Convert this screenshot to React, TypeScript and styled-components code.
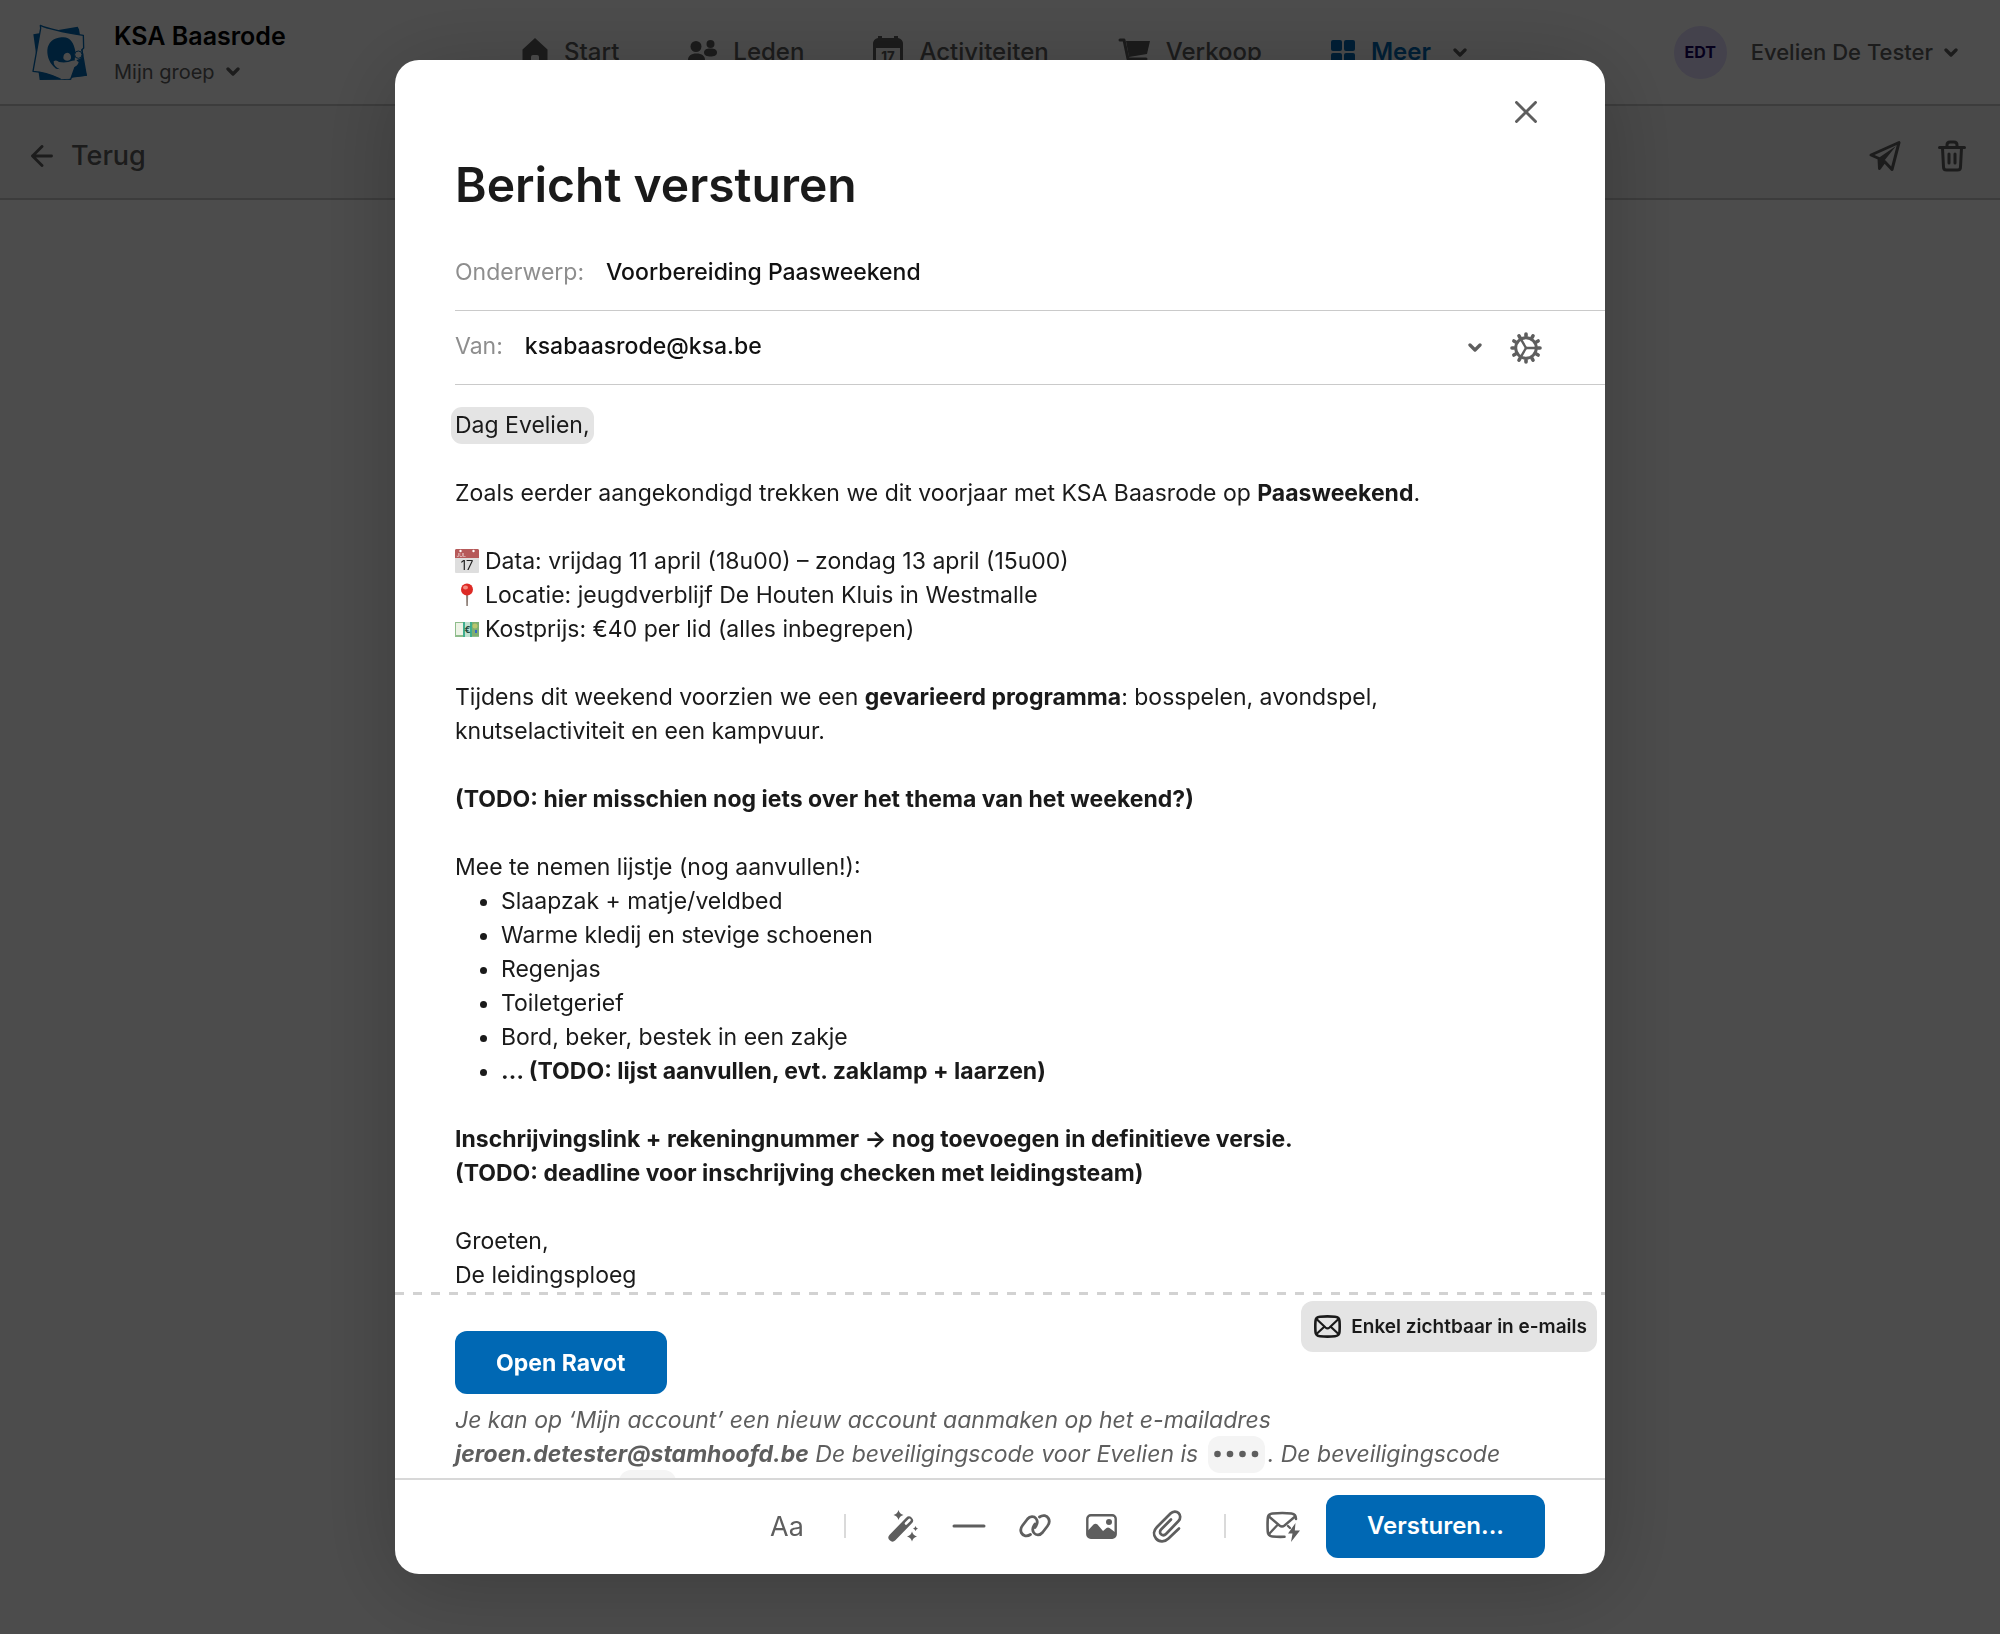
import React from "react";
import styled, { createGlobalStyle, css } from "styled-components";

const blue = "#0068b4";
const ink = "#1a1a1a";
const gray = "#5e5e5e";
const line = "#cacaca";
const sans = `Inter, "Liberation Sans", Arial, sans-serif`;

const GlobalStyle = createGlobalStyle`
  *, *::before, *::after { box-sizing: border-box; }
  body {
    margin: 0;
    background: #fff;
    color: ${ink};
    font-family: ${sans};
  }
  button, input, select { font-family: inherit; }
  svg { display: block; flex: none; }
`;

/* ---------- page behind the dialog ---------- */

const Page = styled.div`
  min-height: 100vh;
  background: #fff;
`;

const Header = styled.header`
  display: grid;
  grid-template-columns: 1fr auto 1fr;
  align-items: center;
  height: 106px;
  padding: 0 42px 0 31px;
  border-bottom: 2px solid ${line};
`;

const Brand = styled.div`
  display: flex;
  align-items: center;
  gap: 25px;
`;

const BrandText = styled.div`
  display: flex;
  flex-direction: column;
  align-items: flex-start;
  gap: 6px;
  padding-top: 3px;
`;

const BrandName = styled.strong`
  font-size: 25px;
  line-height: 30px;
  font-weight: 600;
  color: #000;
`;

const PlainButton = styled.button<{ $size?: number; $gap?: number; $medium?: boolean }>`
  display: flex;
  align-items: center;
  gap: ${(p) => p.$gap ?? 11}px;
  padding: 0;
  border: 0;
  background: none;
  color: ${gray};
  font-size: ${(p) => p.$size ?? 20}px;
  line-height: 30px;
  font-weight: ${(p) => (p.$medium ? 500 : 400)};
`;

const Nav = styled.nav`
  display: flex;
  align-items: center;
  gap: 69px;
`;

const NavLink = styled.a<{ $active?: boolean }>`
  display: flex;
  align-items: center;
  gap: 16px;
  color: ${(p) => (p.$active ? blue : gray)};
  font-size: 24px;
  line-height: 30px;
  font-weight: ${(p) => (p.$active ? 600 : 500)};
  text-decoration: none;
`;

const NavCaret = styled.span`
  margin-left: 6px;
  color: ${gray};
`;

const Account = styled.div`
  display: flex;
  align-items: center;
  justify-content: flex-end;
  gap: 24px;
`;

const Avatar = styled.span`
  display: grid;
  place-items: center;
  width: 53px;
  height: 53px;
  border-radius: 50%;
  background: #e3dcff;
  color: #14005e;
  font-size: 16px;
  font-weight: 700;
`;

const SubBar = styled.div`
  display: flex;
  align-items: center;
  justify-content: space-between;
  height: 94px;
  padding: 7px 34px 0 31px;
  border-bottom: 2px solid ${line};
  background: #f4f4f4;
`;

const Actions = styled.div`
  display: flex;
  gap: 37px;
`;

/* ---------- dialog ---------- */

const Overlay = styled.div`
  position: fixed;
  inset: 0;
  display: flex;
  justify-content: center;
  padding: 60px;
  background: rgba(0, 0, 0, 0.7);
`;

const Dialog = styled.section`
  display: flex;
  flex-direction: column;
  width: 100%;
  max-width: 1210px;
  border-radius: 24px;
  overflow: hidden;
  background: #fff;
  box-shadow: 0 12px 90px rgba(0, 0, 0, 0.22);
`;

const DialogTop = styled.div`
  display: flex;
  justify-content: flex-end;
  padding: 33px 60px 0;
`;

const IconButton = styled.button<{ $wide?: boolean }>`
  display: grid;
  place-items: center;
  width: ${(p) => (p.$wide ? 66 : 38)}px;
  height: 38px;
  padding: 0;
  border: 0;
  background: none;
  color: ${gray};
  font-size: 27px;
`;

const Title = styled.h1`
  margin: 24px 60px 22px;
  font-size: 48px;
  line-height: 60px;
  font-weight: 600;
`;

const Field = styled.div`
  display: flex;
  align-items: center;
  height: 74px;
  margin-left: 60px;
  padding-right: 60px;
  border-bottom: 1px solid ${line};
`;

const fieldText = css`
  padding: 0 0 4px;
  font-size: 23px;
  line-height: 28px;
`;

const Label = styled.label`
  ${fieldText}
  margin-right: 22px;
  color: #8e8e8e;
`;

const control = css`
  ${fieldText}
  flex: 1;
  min-width: 0;
  border: 0;
  outline: 0;
  background: none;
  color: #111;
  font-weight: 500;
`;

const TextInput = styled.input`
  ${control}
`;

const SelectBox = styled.div`
  display: grid;
  flex: 1;
  align-items: center;
  margin-right: 25px;
  color: ${gray};

  > * {
    grid-area: 1 / 1;
  }

  > svg {
    justify-self: end;
    pointer-events: none;
  }
`;

const Select = styled.select`
  ${control}
  appearance: none;
`;

const Editor = styled.div`
  flex: 1;
  min-height: 0;
  overflow: hidden;
  padding-top: 23px;
  font-size: 23px;
  line-height: 34px;
  outline: 0;
`;

const Letter = styled.div`
  padding: 0 60px;
`;

const Paragraph = styled.p`
  margin: 0 0 34px;

  &:last-child {
    margin-bottom: 0;
  }
`;

const Greeting = styled.span`
  margin: 0 -4px;
  padding: 4px 4px 5px;
  border-radius: 11px;
  background: #e4e4e4;
`;

const Emoji = styled.svg`
  display: inline-block;
  width: 24px;
  height: 24px;
  margin-right: 6px;
  vertical-align: -4px;
`;

const Bullets = styled.ul`
  margin: -34px 0 34px;
  padding-left: 46px;
`;

const EmailOnly = styled.div`
  position: relative;
  padding: 39px 60px 0;
  color: ${gray};
  font-style: italic;
  background: repeating-linear-gradient(90deg, #d2d2d2 0 9px, transparent 9px 18px) 0 0 / 100% 3px no-repeat;
`;

const Badge = styled.div`
  position: absolute;
  top: 9px;
  right: 8px;
  display: flex;
  align-items: center;
  gap: 10px;
  height: 51px;
  padding: 0 10px 0 13px;
  border-radius: 12px;
  background: #e4e4e4;
  color: ${ink};
  font-size: 19px;
  font-style: normal;
  font-weight: 600;
`;

const PrimaryButton = styled.button`
  height: 63px;
  padding: 0 41px;
  border: 0;
  border-radius: 12px;
  background: ${blue};
  color: #fff;
  font-size: 23px;
  line-height: 34px;
  font-weight: 700;
`;

const AccountNote = styled.p`
  margin: 9px 0 0;
`;

const Code = styled.span`
  margin: 0 3px;
  padding: 4px 6px 5px;
  border-radius: 12px;
  background: #f4f4f4;
  font-style: normal;
`;

const Dots = styled.svg`
  display: inline-block;
  vertical-align: 4px;
`;

const Footer = styled.footer`
  display: flex;
  align-items: center;
  justify-content: flex-end;
  height: 96px;
  padding: 0 60px 2px 30px;
  border-top: 2px solid #d8d8d8;
`;

const Divider = styled.span`
  width: 2px;
  height: 24px;
  margin: 0 24px;
  background: #dadada;
`;

const SendButton = styled(PrimaryButton)`
  margin-left: 10px;
  font-size: 24px;
  font-weight: 600;
`;

/* ---------- drawings ---------- */

const stroke = {
  fill: "none",
  stroke: "currentColor",
  strokeWidth: 3,
  strokeLinecap: "round" as const,
  strokeLinejoin: "round" as const,
};

const Caret = () => (
  <svg width="14" height="9" viewBox="0 0 14 9" {...stroke} strokeWidth={3.3} aria-hidden="true">
    <path d="M2 2l5 5 5-5" />
  </svg>
);

const Logo = () => (
  <svg width="58" height="57" viewBox="35 27 170 171" role="img" aria-label="KSA">
    <path d="M40 58L173 35l4 8 24 139-40 4-26 8-76 1z" fill={blue} />
    <path d="M61 31q30 14 129 30l1 38-6 6q6 14-1 26l-12 6-20 56-34-2q-40-20-79-22L62 40z" fill="#fff" stroke={blue} strokeWidth="4" strokeLinejoin="round" />
    <path d="M124 67c24-4 38 14 42 42l-2 30-20 26-36-4c-18-14-27-34-26-56 2-22 18-36 42-38z" fill={blue} />
    <path d="M184 128L201 182l-46 6 14-40z" fill={blue} />
    <circle cx="175" cy="119" r="11" fill="#fff" stroke={blue} strokeWidth="3" />
    <path d="M130 128q0-14 12-15 12 2 11 16-2 8-11 8-11-1-12-9z" fill="#fff" />
    <path d="M101 139q8-6 16 2 22 4 40-4 14-2 19 4-2 14-22 18l-6 32-26 2-2-30q-20-8-19-24z" fill="#fff" />
  </svg>
);

const HomeIcon = () => (
  <svg width="26" height="28" viewBox="0 0 26 28" fill="currentColor" aria-hidden="true">
    <path d="M13 0l12.500 11.500V25a3 3 0 0 1-3 3H17v-9a2 2 0 0 0-2-2h-4a2 2 0 0 0-2 2v9H3.500a3 3 0 0 1-3-3V11.500z" />
  </svg>
);

const PeopleIcon = () => (
  <svg width="29" height="24" viewBox="0 0 29 24" fill="currentColor" aria-hidden="true">
    <ellipse cx="8" cy="6.500" rx="5.500" ry="5.500" />
    <circle cx="22.500" cy="4" r="4" />
    <path d="M0 20c0-4 3-6.500 8.500-6.500S17 16 17 20c0 3-3 4-8.500 4S0 23 0 20z" />
    <path d="M16 12.500c0-2.500 2-4 6.500-4s6.500 1.500 6.500 4c0 3-3 4-6.500 4s-6.500-1-6.500-4z" />
  </svg>
);

const CalendarIcon = () => (
  <svg width="30" height="32" viewBox="0 0 30 32" aria-hidden="true">
    <rect x="1.500" y="5" width="27" height="25" rx="4" fill="none" stroke="currentColor" strokeWidth="3" />
    <path d="M0 12V8q0-5 5-6V0h4v2h12V0h4v2q5 1 5 6v4z" fill="currentColor" />
    <text x="15" y="25" textAnchor="middle" fontFamily={sans} fontSize="13" fontWeight="800" fill="currentColor">17</text>
  </svg>
);

const CartIcon = () => (
  <svg width="32" height="30" viewBox="0 0 32 30" aria-hidden="true">
    <path d="M2 3h4l4 19h18" {...stroke} />
    <path d="M8 4h24l-3 13-18 3z" fill="currentColor" />
    <circle cx="12" cy="27" r="2.500" fill="currentColor" />
    <circle cx="25" cy="27" r="2.500" fill="currentColor" />
  </svg>
);

const GridIcon = () => (
  <svg width="24" height="24" viewBox="0 0 24 24" fill="currentColor" aria-hidden="true">
    <rect width="11" height="11" rx="2" />
    <rect x="13" width="11" height="11" rx="2" />
    <rect y="13" width="11" height="11" rx="2" />
    <rect x="13" y="13" width="11" height="11" rx="2" />
  </svg>
);

const BackIcon = () => (
  <svg width="22" height="22" viewBox="0 0 22 22" {...stroke} strokeWidth={2.9} aria-hidden="true">
    <path d="M20.500 11H1.500M11 1.500L1.500 11l9.500 9.500" />
  </svg>
);

const PlaneIcon = () => (
  <svg width="32" height="32" viewBox="0 0 32 32" aria-hidden="true">
    <path d="M30 2.500L23 29.500l-7.500-8-5 7-.5-10-8-3.500z" {...stroke} strokeWidth={3} />
    <path d="M27 6L9.500 18l1 11 4.500-8z" fill="currentColor" />
  </svg>
);

const TrashIcon = () => (
  <svg width="28" height="32" viewBox="0 0 28 32" {...stroke} strokeWidth={3} aria-hidden="true">
    <path d="M1.500 7.500h25M9 7V5q0-3 3-3h4q3 0 3 3v2M4.500 8l1 19q0 3 3 3h11q3 0 3-3l1-19M11 14v9M17 14v9" />
  </svg>
);

const CloseIcon = () => (
  <svg width="22" height="22" viewBox="0 0 22 22" {...stroke} strokeWidth={2.9} aria-hidden="true">
    <path d="M1.500 1.500l19 19M20.500 1.500l-19 19" />
  </svg>
);

const GearIcon = () => (
  <svg width="32" height="32" viewBox="-16 -16 32 32" {...stroke} strokeWidth={3} aria-hidden="true">
    <circle r="10.300" />
    {Array.from({ length: 12 }, (_, i) => (
      <path key={i} d="M12 0h2" strokeWidth="3.600" transform={`rotate(${i * 30})`} />
    ))}
    {[0, 120, 240].map((a) => (
      <path key={a} d="M0 0h10" strokeWidth="2.400" transform={`rotate(${a})`} />
    ))}
  </svg>
);

const WandIcon = () => (
  <svg width="30" height="32" viewBox="0 0 30 32" aria-hidden="true">
    <path d="M4.500 27.500L21 10.500" {...stroke} strokeWidth={8} />
    <path d="M18 13.500l3.500-3.500" {...stroke} stroke="#fff" strokeWidth={2.6} />
    <g fill="currentColor">
      <path d="M10.500 0q1 4 5 5-4 1-5 5-1-4-5-5 4-1 5-5z" />
      <path d="M24 21.500q1 4 5 5-4 1-5 5-1-4-5-5 4-1 5-5z" />
      <path d="M27.500 16q.5 2 2.500 2.500-2 .5-2.500 2.500-.5-2-2.500-2.500 2-.5 2.500-2.500z" />
    </g>
  </svg>
);

const RuleIcon = () => (
  <svg width="34" height="4" viewBox="0 0 34 4" {...stroke} aria-hidden="true">
    <path d="M2 2h30" />
  </svg>
);

const LinkIcon = () => (
  <svg width="32" height="24" viewBox="0 0 32 24" {...stroke} strokeWidth={2.8} aria-hidden="true">
    <path d="M11.500 20.500c-3.500 2.500-7.500 1.500-9-1.500s-1-5 1-7.500l5-6.500c2.500-3 6.500-3 8.500-.5 1.800 2.300 1.500 5 0 7.500l-1 1.500" />
    <path d="M20.500 3.500c3.500-2.500 7.500-1.500 9 1.500s1 5-1 7.500l-5 6.500c-2.500 3-6.500 3-8.500.5-1.800-2.300-1.500-5 0-7.500l1-1.500" transform="translate(0 -.5)" />
  </svg>
);

const ImageIcon = () => (
  <svg width="31" height="25" viewBox="0 0 31 25" aria-hidden="true">
    <rect x="1.300" y="1.300" width="28.400" height="22.400" rx="3.500" {...stroke} strokeWidth={2.4} />
    <path d="M1.500 17l6-6.500q2-1.500 4 0l5.500 6.500 3.500-3q1.500-1 3 0l6 4.500V22l-2 2H3l-1.500-2z" fill="currentColor" />
    <circle cx="23" cy="8" r="3" fill="currentColor" />
  </svg>
);

const ClipIcon = () => (
  <svg width="30" height="34" viewBox="0 0 30 34" {...stroke} strokeWidth={2.7} aria-hidden="true">
    <path d="M27 19.500L16.500 29.500c-4 4-9.500 3.500-12.500 0s-2.500-8 1-11.500L18.500 4.500c2.500-2.500 6-2.500 8-.5s2.500 5.500 0 8L14 25c-1.500 1.500-3.500 1.500-5 .2s-1.200-3.500.3-5L19 10.500" />
  </svg>
);

const MailIcon = () => (
  <svg width="27" height="23" viewBox="0 0 27 23" {...stroke} strokeWidth={2.6} aria-hidden="true">
    <path d="M6 1.800Q13.500 1 21 1.800q4.300.4 4.500 4.200.4 5.500 0 11-.2 3.800-4.500 4.200-7.500.8-15 0Q1.700 20.800 1.500 17q-.4-5.500 0-11Q1.700 2.200 6 1.800z" />
    <path d="M3 4.500l8.500 8q2 1.800 4 0l8.500-8M3 18.500l6.500-6M24 18.500l-6.500-6" strokeWidth="2.200" />
  </svg>
);

const MailBoltIcon = () => (
  <svg width="34" height="32" viewBox="0 0 34 32" aria-hidden="true">
    <g {...stroke} strokeWidth={2.6}>
      <path d="M30 9q0-5-4.500-5.500-9-1-19 0Q2 4 1.800 8q-.5 7 0 14 .2 4 4.700 4.500 6 .6 12 .3" />
      <path d="M3.500 7l10 8.500q2.500 2 5 0L28.500 7M3.500 23.500l7.500-8M22 16l2 2" strokeWidth="2.300" />
    </g>
    <path d="M29.500 13L22 23.500h4.500L25 32l9-11.500h-5.200z" fill="currentColor" />
  </svg>
);

const CalendarEmoji = () => (
  <Emoji viewBox="0 0 24 24" role="img" aria-label="kalender">
    <rect width="24" height="24" rx="1" fill="#dedede" />
    <path d="M1 0h22l1 1v8H0V1z" fill="#b65a5a" />
    <circle cx="5.500" cy="2" r="1.200" fill="#fff" />
    <circle cx="18.500" cy="2" r="1.200" fill="#fff" />
    <text x="1.500" y="8" fontFamily={sans} fontSize="5" fill="#f0dada">JUL</text>
    <text x="12" y="21" textAnchor="middle" fontFamily={sans} fontSize="13" fill="#222">17</text>
  </Emoji>
);

const PinEmoji = () => (
  <Emoji viewBox="0 0 24 24" role="img" aria-label="locatie">
    <path d="M11 10h2.200l-.3 13h-1.600z" fill="#8f8078" />
    <circle cx="12" cy="6.500" r="6" fill="#dd2a25" />
    <ellipse cx="10.500" cy="4.500" rx="2.500" ry="2" fill="#f58a80" />
  </Emoji>
);

const MoneyEmoji = () => (
  <Emoji viewBox="0 0 24 24" role="img" aria-label="geld">
    <rect y="5" width="24" height="15" fill="#8fbd8c" />
    <rect x="1" y="6" width="8" height="12" fill="#edf3e6" />
    <rect x="15" y="5" width="9" height="14" fill="#7fae70" />
    <circle cx="20" cy="9" r="2.500" fill="#b9c66e" />
    <rect x="20" y="13" width="2" height="3" fill="#3568c8" />
    <path d="M8 5h2v15H8zM15 5h2v15h-2z" fill="#3fae8f" />
    <rect x="10" y="5" width="5" height="15" fill="#bfe0cf" />
    <text x="12.500" y="15.500" textAnchor="middle" fontFamily={sans} fontSize="9" fontWeight="700" fill="#1d4a3c">€</text>
  </Emoji>
);

const SecretCode = () => (
  <Code>
    <Dots width="45" height="8" viewBox="0 0 45 8" fill={gray} role="img" aria-label="verborgen code">
      {[3.5, 16, 28.5, 41].map((x) => (
        <circle key={x} cx={x} cy="4" r="3.300" />
      ))}
    </Dots>
  </Code>
);

/* ---------- content ---------- */

const navItems = [
  { label: "Start", icon: <HomeIcon /> },
  { label: "Leden", icon: <PeopleIcon /> },
  { label: "Activiteiten", icon: <CalendarIcon /> },
  { label: "Verkoop", icon: <CartIcon /> },
  { label: "Meer", icon: <GridIcon />, active: true },
];

const packingList = [
  "Slaapzak + matje/veldbed",
  "Warme kledij en stevige schoenen",
  "Regenjas",
  "Toiletgerief",
  "Bord, beker, bestek in een zakje",
];

const tools = [
  { label: "Slimme tekst", icon: <WandIcon /> },
  { label: "Scheidingslijn", icon: <RuleIcon /> },
  { label: "Link", icon: <LinkIcon /> },
  { label: "Afbeelding", icon: <ImageIcon /> },
  { label: "Bijlage", icon: <ClipIcon /> },
];

export default function App() {
  return (
    <>
      <GlobalStyle />
      <Page>
        <Header>
          <Brand>
            <Logo />
            <BrandText>
              <BrandName>KSA Baasrode</BrandName>
              <PlainButton>
                Mijn groep <Caret />
              </PlainButton>
            </BrandText>
          </Brand>
          <Nav>
            {navItems.map((item) => (
              <NavLink key={item.label} href="#" $active={item.active}>
                {item.icon}
                {item.label}
                {item.active && (
                  <NavCaret>
                    <Caret />
                  </NavCaret>
                )}
              </NavLink>
            ))}
          </Nav>
          <Account>
            <Avatar>EDT</Avatar>
            <PlainButton $size={22} $medium>
              Evelien De Tester <Caret />
            </PlainButton>
          </Account>
        </Header>
        <SubBar>
          <PlainButton $size={27} $gap={18} $medium>
            <BackIcon />
            Terug
          </PlainButton>
          <Actions>
            <PlainButton aria-label="Versturen">
              <PlaneIcon />
            </PlainButton>
            <PlainButton aria-label="Verwijderen">
              <TrashIcon />
            </PlainButton>
          </Actions>
        </SubBar>
      </Page>

      <Overlay>
        <Dialog role="dialog" aria-modal="true" aria-labelledby="dialog-title">
          <DialogTop>
            <IconButton aria-label="Sluiten">
              <CloseIcon />
            </IconButton>
          </DialogTop>
          <Title id="dialog-title">Bericht versturen</Title>
          <Field>
            <Label htmlFor="subject">Onderwerp:</Label>
            <TextInput id="subject" type="text" defaultValue="Voorbereiding Paasweekend" />
          </Field>
          <Field>
            <Label htmlFor="sender">Van:</Label>
            <SelectBox>
              <Select id="sender">
                <option>ksabaasrode@ksa.be</option>
              </Select>
              <Caret />
            </SelectBox>
            <IconButton aria-label="Instellingen">
              <GearIcon />
            </IconButton>
          </Field>

          <Editor>
            <Letter>
              <Paragraph>
                <Greeting>Dag Evelien,</Greeting>
              </Paragraph>
              <Paragraph>
                Zoals eerder aangekondigd trekken we dit voorjaar met KSA Baasrode op <b>Paasweekend</b>.
              </Paragraph>
              <Paragraph>
                <CalendarEmoji />
                Data: vrijdag 11 april (18u00) – zondag 13 april (15u00)
                <br />
                <PinEmoji />
                Locatie: jeugdverblijf De Houten Kluis in Westmalle
                <br />
                <MoneyEmoji />
                Kostprijs: €40 per lid (alles inbegrepen)
              </Paragraph>
              <Paragraph>
                Tijdens dit weekend voorzien we een <b>gevarieerd programma</b>: bosspelen, avondspel,
                <br />
                knutselactiviteit en een kampvuur.
              </Paragraph>
              <Paragraph>
                <b>(TODO: hier misschien nog iets over het thema van het weekend?)</b>
              </Paragraph>
              <Paragraph>Mee te nemen lijstje (nog aanvullen!):</Paragraph>
              <Bullets>
                {packingList.map((item) => (
                  <li key={item}>{item}</li>
                ))}
                <li>
                  <b>… (TODO: lijst aanvullen, evt. zaklamp + laarzen)</b>
                </li>
              </Bullets>
              <Paragraph>
                <b>
                  Inschrijvingslink + rekeningnummer → nog toevoegen in definitieve versie.
                  <br />
                  (TODO: deadline voor inschrijving checken met leidingsteam)
                </b>
              </Paragraph>
              <Paragraph>
                Groeten,
                <br />
                De leidingsploeg
              </Paragraph>
            </Letter>
            <EmailOnly>
              <Badge>
                <MailIcon />
                Enkel zichtbaar in e-mails
              </Badge>
              <PrimaryButton>Open Ravot</PrimaryButton>
              <AccountNote>
                Je kan op ‘Mijn account’ een nieuw account aanmaken op het e-mailadres{" "}
                <b>jeroen.detester@stamhoofd.be</b> De beveiligingscode voor Evelien is <SecretCode />. De
                beveiligingscode voor Jeroen is <SecretCode />.
              </AccountNote>
            </EmailOnly>
          </Editor>

          <Footer>
            <IconButton $wide aria-label="Tekststijl">
              Aa
            </IconButton>
            <Divider />
            {tools.map((tool) => (
              <IconButton key={tool.label} $wide aria-label={tool.label}>
                {tool.icon}
              </IconButton>
            ))}
            <Divider />
            <IconButton $wide aria-label="Sjablonen">
              <MailBoltIcon />
            </IconButton>
            <SendButton>Versturen...</SendButton>
          </Footer>
        </Dialog>
      </Overlay>
    </>
  );
}
